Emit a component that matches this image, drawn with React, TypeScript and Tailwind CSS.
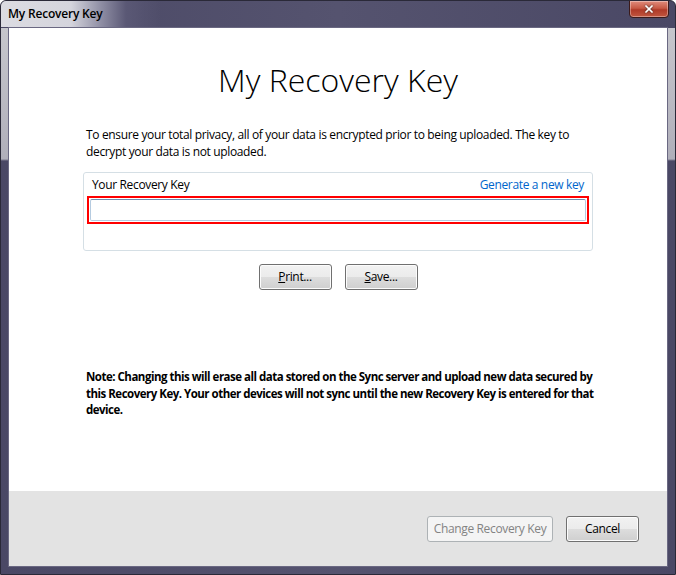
import { X } from 'lucide-react'

const font = "font-['Open_Sans','Noto_Sans',sans-serif]"

function WinButton({ children, disabled = false, className = '' }: { children: React.ReactNode; disabled?: boolean; className?: string }) {
  if (disabled) {
    return (
      <button className={`h-[26px] rounded-[3px] border border-[#adb2b5] bg-[#f4f4f4] text-[12px] tracking-[-0.35px] text-[#838383] ${className}`}>
        {children}
      </button>
    )
  }
  return (
    <button
      className={`h-[26px] rounded-[3px] border border-[#707070] bg-[linear-gradient(#f2f2f2_0%,#ebebeb_50%,#dddddd_50%,#cfcfcf_100%)] text-[12px] tracking-[-0.35px] text-black shadow-[inset_0_0_0_1px_#fcfcfc] ${className}`}
    >
      {children}
    </button>
  )
}

export default function App() {
  return (
    <div
      className={`${font} relative flex h-[575px] w-[676px] flex-col overflow-hidden rounded-t-[6px] border border-[#2a2938] bg-[linear-gradient(to_bottom,transparent_0px,transparent_27px,#c6c6cc_27px,#b0afba_158px,transparent_160px),linear-gradient(to_right,#4a4865,#55536f_50%,#4a4865)]`}
    >
      {/* title bar */}
      <div className="flex h-[26px] shrink-0 items-center bg-[linear-gradient(to_right,#dcdce2_0px,#d4d4dc_70px,#8f8ea4_100px,#5a5875_125px,transparent_160px)] pl-[7px]">
        <span className="text-[12px] font-semibold tracking-[-0.2px] text-black">My Recovery Key</span>
      </div>

      {/* close button */}
      <div className="absolute right-[6px] top-[-1px] flex h-[18px] w-[40px] items-center justify-center rounded-b-[4px] border border-[#3b1a1a] bg-[linear-gradient(#e08c7c_0%,#c85a45_45%,#b03a28_55%,#c2563f_100%)] shadow-[inset_0_0_0_1px_rgba(255,255,255,0.35)]">
        <X className="h-[12px] w-[12px] text-white drop-shadow-[0_0_1px_#333]" strokeWidth={3.5} />
      </div>

      {/* client area */}
      <div className="mx-[7px] mb-[7px] flex flex-1 flex-col border border-[#6a6882] bg-white">
        <div className="flex flex-1 flex-col">
          <div className="mx-auto flex w-[510px] flex-col text-[12px] tracking-[-0.35px]">
            <h1 className="mt-[28px] text-center text-[32px] font-light leading-[48px] tracking-normal text-black">My Recovery Key</h1>
            <p className="mt-[22px] px-[3px] leading-[17px] text-black">
              To ensure your total privacy, all of your data is encrypted prior to being uploaded. The key to decrypt your data is not uploaded.
            </p>
            <div className="mt-[12px] h-[79px] rounded-[3px] border border-[#d5dfe5] px-[3px] pt-[4px]">
              <div className="flex items-center justify-between px-[5px] leading-[16px]">
                <span className="text-black">Your Recovery Key</span>
                <a className="text-[#0066cc]">Generate a new key</a>
              </div>
              <div className="mt-[3px] border-2 border-[#ff0000] p-[1px]">
                <div className="h-[22px] rounded-[2px] border border-[#b5cbe0] border-t-[#6d8db0] bg-white" />
              </div>
            </div>
            <div className="mt-[13px] flex justify-center gap-[13px]">
              <WinButton className="w-[73px]">
                <u>P</u>rint...
              </WinButton>
              <WinButton className="w-[73px]">
                <u>S</u>ave...
              </WinButton>
            </div>
            <p className="mr-[-8px] mt-[79px] pl-[3px] text-[11.5px] font-bold leading-[16.5px] tracking-[-0.5px] text-black">
              Note: Changing this will erase all data stored on the Sync server and upload new data secured by this Recovery Key. Your other devices will not sync until the new Recovery Key is entered for that device.
            </p>
          </div>
        </div>
        <div className="flex h-[75px] items-center justify-end gap-[13px] bg-[#e3e3e3] pr-[28px]">
          <WinButton disabled className="w-[126px]">
            Change Recovery Key
          </WinButton>
          <WinButton className="w-[73px]">Cancel</WinButton>
        </div>
      </div>
    </div>
  )
}
